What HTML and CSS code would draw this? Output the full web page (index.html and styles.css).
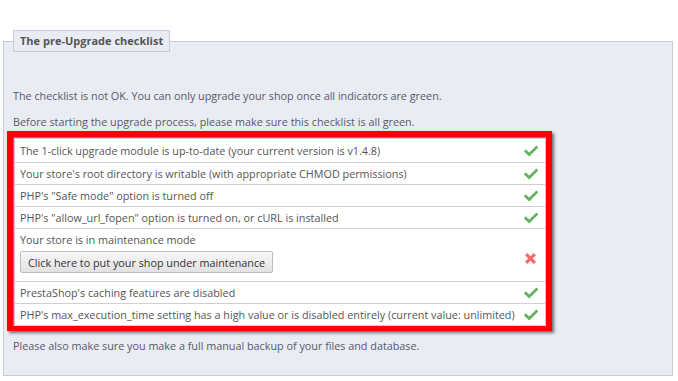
FILE: index.html
```html
<!DOCTYPE html>
<html lang="en">
<head>
    <meta charset="UTF-8">
    <title>1-Click Upgrade</title>
    <link rel="stylesheet" href="styles.css">
</head>
<body>

<div class="page">
    <fieldset class="checklist">
        <legend>The pre-Upgrade checklist</legend>

        <p class="intro">The checklist is not OK. You can only upgrade your shop once all indicators are green.</p>
        <p class="before">Before starting the upgrade process, please make sure this checklist is all green.</p>

        <div class="highlight">
            <table class="checks">
                <tr class="first">
                    <td>The 1-click upgrade module is up-to-date (your current version is v1.4.8)</td>
                    <td class="state"><svg class="ok" viewBox="0 0 14 12"><path d="M1.8 6.3 L5.2 9.5 L12.4 2.4"/></svg></td>
                </tr>
                <tr>
                    <td>Your store's root directory is writable (with appropriate CHMOD permissions)</td>
                    <td class="state"><svg class="ok" viewBox="0 0 14 12"><path d="M1.8 6.3 L5.2 9.5 L12.4 2.4"/></svg></td>
                </tr>
                <tr>
                    <td>PHP's "Safe mode" option is turned off</td>
                    <td class="state"><svg class="ok" viewBox="0 0 14 12"><path d="M1.8 6.3 L5.2 9.5 L12.4 2.4"/></svg></td>
                </tr>
                <tr>
                    <td>PHP's "allow_url_fopen" option is turned on, or cURL is installed</td>
                    <td class="state"><svg class="ok" viewBox="0 0 14 12"><path d="M1.8 6.3 L5.2 9.5 L12.4 2.4"/></svg></td>
                </tr>
                <tr class="maintenance">
                    <td>
                        Your store is in maintenance mode
                        <div><button type="button" class="button">Click here to put your shop under maintenance</button></div>
                    </td>
                    <td class="state"><svg class="ko" viewBox="0 0 12 12"><path d="M2 2 L10 10 M10 2 L2 10"/></svg></td>
                </tr>
                <tr>
                    <td>PrestaShop's caching features are disabled</td>
                    <td class="state"><svg class="ok" viewBox="0 0 14 12"><path d="M1.8 6.3 L5.2 9.5 L12.4 2.4"/></svg></td>
                </tr>
                <tr>
                    <td>PHP's max_execution_time setting has a high value or is disabled entirely (current value: unlimited)</td>
                    <td class="state"><svg class="ok" viewBox="0 0 14 12"><path d="M1.8 6.3 L5.2 9.5 L12.4 2.4"/></svg></td>
                </tr>
            </table>
        </div>

        <p class="backup">Please also make sure you make a full manual backup of your files and database.</p>
    </fieldset>
</div>

</body>
</html>
```

FILE: styles.css
```css
body {
    margin: 0;
    padding: 0;
    background-color: white;
    font-family: 'Open Sans', sans-serif;
    font-size: 10.8px;
    color: #585a69;
}
.page {
    padding: 30px 5px 0 3px;
}
.checklist {
    margin: 0;
    padding: 0 9px 0 9px;
    height: 346px;
    box-sizing: border-box;
    border: 1px solid #c9ccd6;
    background-color: #e9ecf3;
}
.checklist legend {
    padding: 2px 6px 3px 6px;
    border: 1px solid #c9ccd6;
    background-color: #e9ecf3;
    font-weight: bold;
    font-size: 11px;
    color: #555;
}
.checklist p {
    margin: 0 0 8px 0;
    line-height: 18px;
}
.checklist .intro {
    margin-top: 35px;
}
.checklist .before {
    margin-bottom: 0;
}
.highlight {
    margin: 0 -6px;
    width: 531px;
    border: 6px solid #ff0000;
    border-bottom-width: 5px;
    padding: 1px 1px 0 1px;
    box-shadow: 2px 2px 3px rgba(0,0,0,0.55), inset 1px 1px 2px rgba(0,0,0,0.6);
}
.checks {
    width: 529px;
    border-collapse: collapse;
    background-color: white;
    border: 1px solid #c9c9c9;
    color: #555;
    white-space: nowrap;
}
.checks td {
    height: 21px;
    padding: 0 5px;
    border-bottom: 1px solid #cfcfcf;
    vertical-align: middle;
}
.checks .first td {
    height: 23px;
}
.checks td.state {
    width: 14px;
    padding: 0 7px 0 4px;
}
.maintenance td {
    padding-top: 3px;
    padding-bottom: 8px;
}
.maintenance td.state {
    padding-top: 6px;
}
.button {
    margin-top: 4px;
    padding: 1px 7px;
    height: 22px;
    border: 1px solid #bdbdbd;
    border-radius: 2px;
    background: linear-gradient(#f7f7f7, #e2e2e2);
    font-family: 'Open Sans', sans-serif;
    font-size: 10.8px;
    color: #333;
}
.ok, .ko {
    display: block;
    width: 14px;
    height: 12px;
    fill: none;
}
.ok path {
    stroke: #62b45f;
    stroke-width: 2.8;
    stroke-linecap: square;
}
.ko {
    width: 13px;
    height: 13px;
}
.ko path {
    stroke: #f06a6e;
    stroke-width: 3;
}
.checklist .backup {
    margin-top: 6px;
}
```
